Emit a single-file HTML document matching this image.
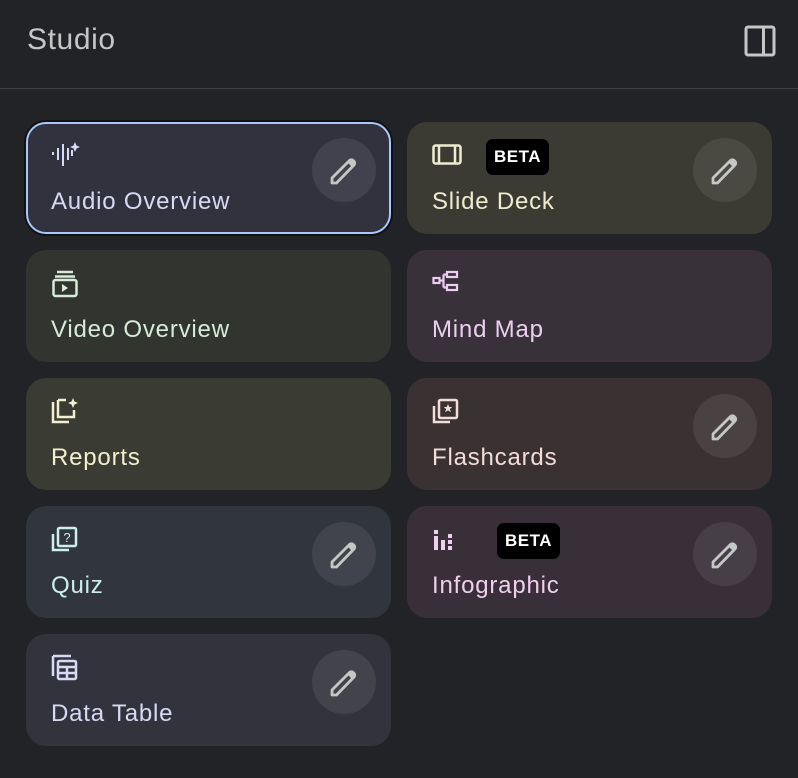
<!DOCTYPE html>
<html><head><style>
*{margin:0;padding:0;box-sizing:border-box}
body{width:798px;height:778px;background:#212327;font-family:"Liberation Sans",sans-serif;position:relative;overflow:hidden}
.h{position:absolute;left:27px;top:23px;font-size:30px;color:#c4c7c5;letter-spacing:0.6px}
.div{position:absolute;left:0;right:0;top:88px;height:1px;background:#3c3f43}
.c{position:absolute;width:365px;height:112px;border-radius:20px}
.c svg.i{position:absolute;left:25px;top:20px}
.c .l{position:absolute;left:25px;top:66px;font-size:24px;letter-spacing:0.8px}
.e{position:absolute;right:15px;top:16px;width:64px;height:64px;border-radius:50%;background:rgba(255,255,255,0.08)}
.e svg{position:absolute;left:17px;top:17px}
.b{position:absolute;top:17px;height:36px;padding:0 8px;background:#000;color:#fff;border-radius:7px;font-weight:bold;font-size:17px;line-height:36px;letter-spacing:0.5px}
</style></head><body>
<svg width="0" height="0" style="position:absolute"><defs><g id="p"><path d="M3 28v-5L20.5 5.5a2.5 2.5 0 0 1 3.5 0l1 1a2.5 2.5 0 0 1 0 3.5L7.5 28z" fill="none" stroke="#c4c7c5" stroke-width="2.8" stroke-linejoin="round"/><path d="M18.5 7.5L21.5 4.5a2.5 2.5 0 0 1 3.5 0l1 1a2.5 2.5 0 0 1 0 3.5L23 12z" fill="#c4c7c5"/></g></defs></svg>
<div class="h">Studio</div>
<svg style="position:absolute;left:744px;top:25px" width="32" height="32" viewBox="0 0 32 32"><rect x="2" y="2" width="28" height="28" rx="2" fill="none" stroke="#c4c7c5" stroke-width="3"/><rect x="18" y="2" width="3" height="28" fill="#c4c7c5"/></svg>
<div class="div"></div>

<div class="c" style="left:26px;top:122px;background:#32323f;border:2px solid #a8c7fa;box-shadow:0 0 0 2px #111">
<svg class="i" style="left:23px;top:18px" width="30" height="26" viewBox="0 0 30 26" fill="#d8daf5"><rect x="1" y="10" width="2" height="3"/><rect x="6" y="6" width="2" height="12"/><rect x="11" y="2" width="2" height="22"/><rect x="16" y="6" width="2" height="12"/><rect x="20" y="8" width="2" height="6"/><path d="M24 0l1.5 3.5L29 5l-3.5 1.5L24 10l-1.5-3.5L19 5l3.5-1.5z"/></svg>
<div class="l" style="left:23px;top:64px;color:#d8daf5">Audio Overview</div>
<div class="e" style="right:13px;top:14px"><svg width="30" height="30" viewBox="0 0 30 30"><use href="#p"/></svg></div>
</div>

<div class="c" style="left:407px;top:122px;background:#3b3b33">
<svg class="i" width="30" height="24" viewBox="0 0 30 24" fill="none" stroke="#eeeccf" stroke-width="2.5"><rect x="1.5" y="3.5" width="27" height="18" rx="2"/><path d="M7 3.5v18M23 3.5v18"/></svg>
<div class="b" style="left:79px">BETA</div>
<div class="l" style="color:#eeeccf">Slide Deck</div>
<div class="e"><svg width="30" height="30" viewBox="0 0 30 30"><use href="#p"/></svg></div>
</div>

<div class="c" style="left:26px;top:250px;background:#31342f">
<svg class="i" width="28" height="28" viewBox="0 0 28 28" fill="none" stroke="#d6ecd8" stroke-width="2.5"><path d="M6 2h16M4 6.5h20"/><rect x="2.5" y="10" width="23" height="16" rx="2"/><path d="M11 14v8l6-4z" fill="#d6ecd8" stroke="none"/></svg>
<div class="l" style="color:#d6ecd8">Video Overview</div>
</div>

<div class="c" style="left:407px;top:250px;background:#38313a">
<svg class="i" width="28" height="24" viewBox="0 0 28 24" fill="none" stroke="#eccff0" stroke-width="2.2"><rect x="1.5" y="8" width="6" height="5"/><rect x="15" y="2" width="10" height="5"/><rect x="15" y="15" width="10" height="5"/><path d="M7.5 10.5h4M11.5 4.5v13M11.5 4.5h3.5M11.5 17.5h3.5"/></svg>
<div class="l" style="color:#eccff0">Mind Map</div>
</div>

<div class="c" style="left:26px;top:378px;background:#3a3b32">
<svg class="i" width="28" height="28" viewBox="0 0 28 28" fill="none" stroke="#f3efcf" stroke-width="2.5"><path d="M2 4v20h16"/><path d="M7 2v17h16v-7"/><path d="M7 2h8" /><path d="M22 0l1.5 3.5L27 5l-3.5 1.5L22 10l-1.5-3.5L17 5l3.5-1.5z" fill="#f3efcf" stroke="none"/></svg>
<div class="l" style="color:#f3efcf">Reports</div>
</div>

<div class="c" style="left:407px;top:378px;background:#3a3132">
<svg class="i" width="28" height="28" viewBox="0 0 28 28" fill="none" stroke="#f5dcd8" stroke-width="2.5"><path d="M2 8v16h16"/><rect x="7" y="2" width="18" height="18" rx="1.5"/><path d="M16 6l1.3 3h3l-2.4 2 1 3.2L16 12.4l-2.9 1.8 1-3.2-2.4-2h3z" fill="#f5dcd8" stroke="none"/></svg>
<div class="l" style="color:#f5dcd8">Flashcards</div>
<div class="e"><svg width="30" height="30" viewBox="0 0 30 30"><use href="#p"/></svg></div>
</div>

<div class="c" style="left:26px;top:506px;background:#31353d">
<svg class="i" width="28" height="28" viewBox="0 0 28 28" fill="none" stroke="#cdeef0" stroke-width="2.5"><path d="M2 8v16h16"/><rect x="7" y="2" width="18" height="18" rx="1.5"/><text x="16" y="16" font-size="13" font-family="Liberation Sans" fill="#cdeef0" stroke="none" text-anchor="middle">?</text></svg>
<div class="l" style="color:#cdeef0">Quiz</div>
<div class="e"><svg width="30" height="30" viewBox="0 0 30 30"><use href="#p"/></svg></div>
</div>

<div class="c" style="left:407px;top:506px;background:#382f38">
<svg class="i" width="26" height="26" viewBox="0 0 26 26" fill="#f0cfee"><rect x="2" y="4" width="4" height="4"/><rect x="2" y="10" width="4" height="14"/><rect x="9" y="14" width="4" height="10"/><rect x="16" y="8" width="4" height="4"/><rect x="16" y="14" width="4" height="4"/><rect x="16" y="20" width="4" height="4"/></svg>
<div class="b" style="left:90px">BETA</div>
<div class="l" style="color:#f0cfee">Infographic</div>
<div class="e"><svg width="30" height="30" viewBox="0 0 30 30"><use href="#p"/></svg></div>
</div>

<div class="c" style="left:26px;top:634px;background:#33333d">
<svg class="i" width="28" height="28" viewBox="0 0 28 28" fill="none" stroke="#d8daf5" stroke-width="2.5"><path d="M2 2v20M2 2h18"/><rect x="7" y="7" width="18" height="18" rx="1.5"/><path d="M7 13h18M7 19h18M16 13v12"/></svg>
<div class="l" style="color:#d8daf5">Data Table</div>
<div class="e"><svg width="30" height="30" viewBox="0 0 30 30"><use href="#p"/></svg></div>
</div>
</body></html>
